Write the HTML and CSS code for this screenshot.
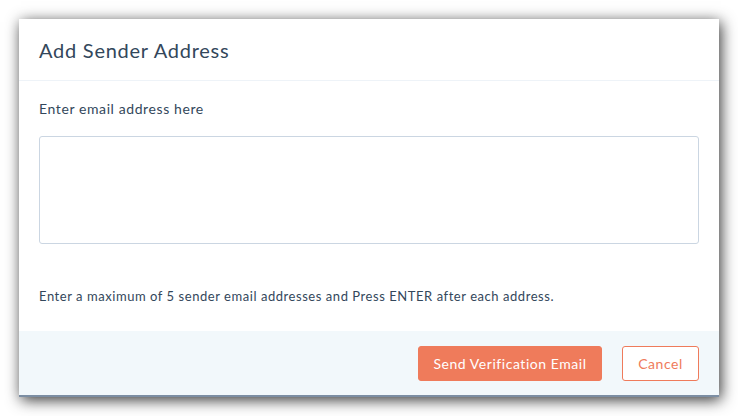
FILE: index.html
```html
<!DOCTYPE html>
<html lang="en">
<head>
  <meta charset="UTF-8" />
  <title>Add Sender Address</title>
  <link rel="stylesheet" href="styles.css">
</head>
<body>

  <!-- dialog -->
  <div class="modal">
    <div class="modal-header">
      <h1>Add Sender Address</h1>
    </div>

    <div class="modal-body">
      <label for="emails">Enter email address here</label>
      <textarea id="emails"></textarea>
      <p class="hint">Enter a maximum of 5 sender email addresses and Press ENTER after each address.</p>
    </div>

    <div class="modal-footer">
      <button class="btn btn-primary">Send Verification Email</button>
      <button class="btn btn-secondary">Cancel</button>
    </div>
  </div>

</body>
</html>
```

FILE: styles.css
```css
body {
  margin: 0;
  padding: 19px;
  background: #fff;
  font-family: 'Lato', sans-serif;
  color: #33475b;
}
.modal {
  width: 700px;
  background: #fff;
  box-shadow: 2px 3px 14px rgba(0, 0, 0, 0.8);
  border-bottom: 2px solid #7c8ea3;
}
.modal-header {
  height: 61px;
  padding: 0 20px;
  display: flex;
  align-items: center;
  border-bottom: 1px solid #eef3f8;
}
h1 {
  margin: 0;
  font-size: 20px;
  font-weight: 400;
  letter-spacing: 0.75px;
}
.modal-body {
  padding: 19px 20px 0;
  height: 231px;
  display: flex;
  flex-direction: column;
}
label {
  font-size: 14px;
  line-height: 18px;
  letter-spacing: 0.6px;
}
textarea {
  box-sizing: border-box;
  margin-top: 18px;
  height: 108px;
  border: 1px solid #cbd6e2;
  border-radius: 3px;
  resize: none;
  background: #fff;
}
.hint {
  margin: 43px 0 0;
  font-size: 13px;
  line-height: 18px;
  letter-spacing: 0.55px;
}
.modal-footer {
  height: 64px;
  background: #f2f8fb;
  display: flex;
  justify-content: flex-end;
  align-items: center;
  gap: 20px;
  padding: 0 20px;
}
.btn {
  height: 35px;
  border-radius: 3px;
  font-family: 'Lato', sans-serif;
  font-size: 14px;
  letter-spacing: 0.55px;
  cursor: pointer;
}
.btn-primary {
  width: 184px;
  background: #ef7b5b;
  border: 1px solid #ef7b5b;
  color: #fff;
}
.btn-secondary {
  width: 77px;
  background: #fff;
  border: 1px solid #ef7b5b;
  color: #ef7b5b;
}
```
